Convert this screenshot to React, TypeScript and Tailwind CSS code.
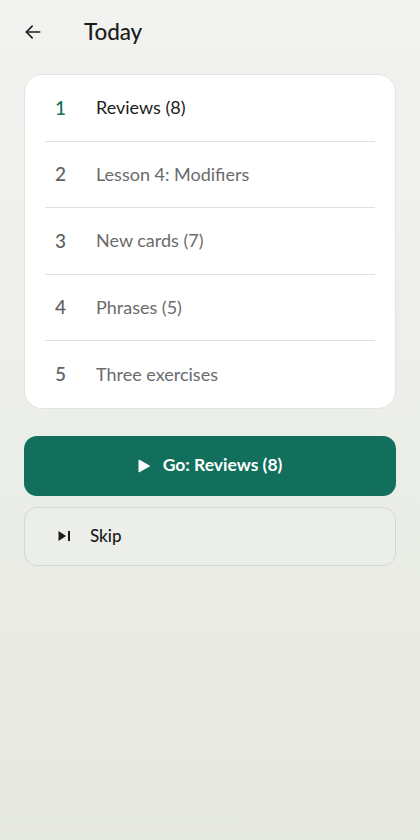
import React from "react";

const items = [
  "Reviews (8)",
  "Lesson 4: Modifiers",
  "New cards (7)",
  "Phrases (5)",
  "Three exercises",
];

export default function App() {
  return (
    <div
      className="min-h-[840px] w-full bg-gradient-to-b from-[#f2f3f0] to-[#e6e9e1] px-6"
      style={{ fontFamily: "Lato, 'Noto Sans', sans-serif" }}
    >
      <div className="flex h-[64px] items-center">
        <svg width="20" height="20" viewBox="0 0 24 24" fill="none" stroke="#1c1c1c" strokeWidth="2" strokeLinecap="round" strokeLinejoin="round" className="-ml-[1px]">
          <path d="M20 12H4" />
          <path d="M11 5l-7 7 7 7" />
        </svg>
        <div className="ml-[41px] -mt-[1px] text-[22.5px] font-medium text-[#1c1c1c] tracking-[-0.1px]">Today</div>
      </div>
      <div className="mt-[10px] rounded-[18px] border border-[#e2e4df] bg-white px-5">
        {items.map((t, i) => (
          <div
            key={t}
            className={`flex h-[66.5px] items-center ${i < items.length - 1 ? "border-b border-[#e0e0e0]" : ""}`}
          >
            <div className={`w-[51px] pl-[10px] text-[19px] font-medium ${i === 0 ? "text-[#14705c]" : "text-[#5e6161]"}`}>
              {i + 1}
            </div>
            <div className={`text-[18px] ${i === 0 ? "text-[#1c1c1c]" : "text-[#6a6c6c]"}`}>{t}</div>
          </div>
        ))}
      </div>
      <button className="mt-[27px] flex h-[60px] w-full items-center justify-center rounded-[13px] bg-[#116f5c] text-[17.5px] font-bold text-white">
        <svg width="12" height="14" viewBox="0 0 12 14" className="mr-[13px]">
          <path d="M1 1 L11.5 7 L1 13 Z" fill="white" strokeLinejoin="round" stroke="white" strokeWidth="1" />
        </svg>
        Go: Reviews (8)
      </button>
      <button className="mt-[11px] flex h-[59px] w-full items-center rounded-[13px] border border-[#d5d7d2] bg-[#eceeea] pl-[33px] text-[17px] font-medium text-[#1c1c1c]">
        <svg width="13" height="12" viewBox="0 0 13 12">
          <path d="M0.5 1 L8 6 L0.5 11 Z" fill="#1c1c1c" />
          <rect x="10" y="1" width="2" height="10" fill="#1c1c1c" />
        </svg>
        <span className="ml-[19px]">Skip</span>
      </button>
    </div>
  );
}
